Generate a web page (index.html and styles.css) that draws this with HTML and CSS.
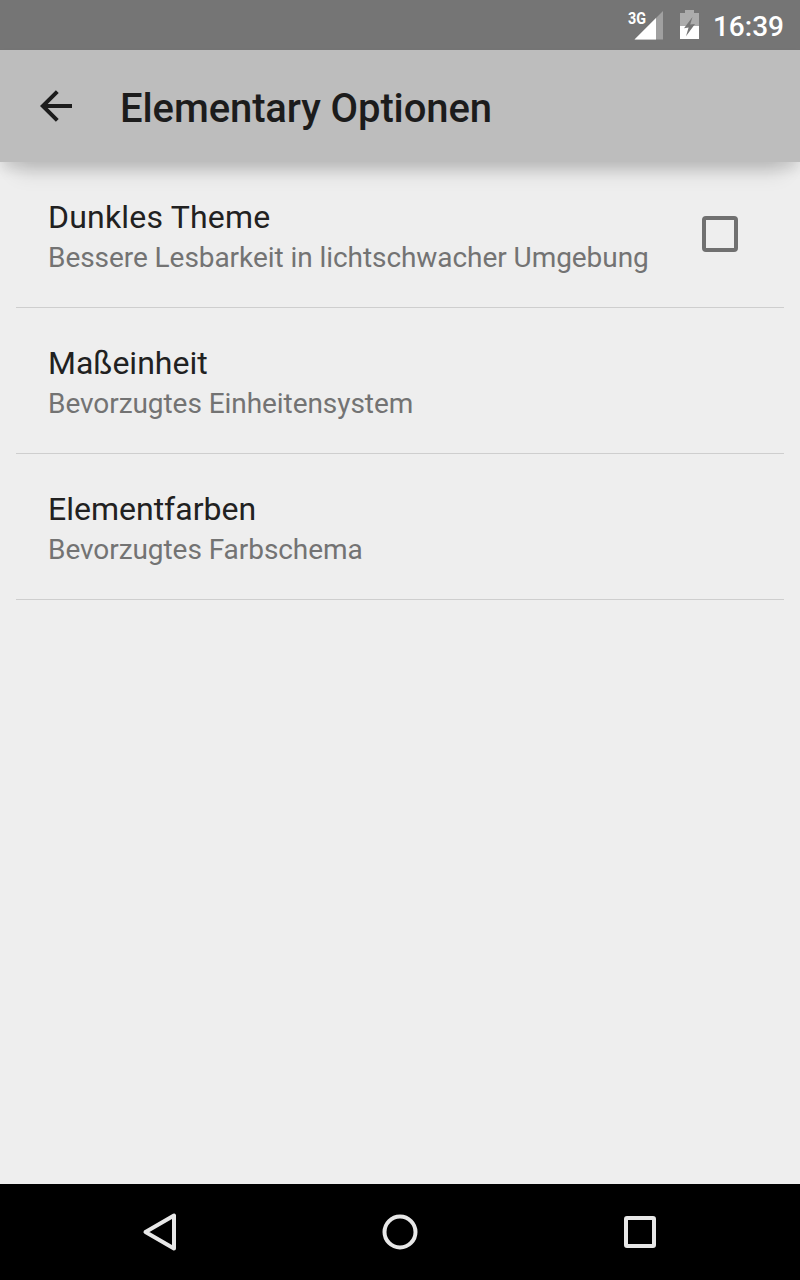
FILE: index.html
```html
<!DOCTYPE html>
<html lang="de">
<head>
<meta charset="utf-8">
<title>Elementary Optionen</title>
<link rel="stylesheet" href="styles.css">
</head>
<body>
<div class="screen">
  <div class="status-bar">
    <svg class="signal" width="38" height="32" viewBox="626 9 38 32">
      <path d="M634.5 39.5L663 11V39.5Z" fill="#a0a0a0"/>
      <path d="M634.5 39.5L656 18V39.5Z" fill="#fff"/>
      <text class="network" x="628" y="24" textLength="18" lengthAdjust="spacingAndGlyphs">3G</text>
    </svg>
    <svg class="battery" width="20" height="30" viewBox="680 10 20 30">
      <path d="M685 10H694V13H699V26H680V13H685Z" fill="#acacac"/>
      <path d="M680 26H699V39H680Z" fill="#fff"/>
      <path d="M692.5 17L684 28.2L688.6 27.6L686 36.3L695 24L690.2 24.6Z" fill="#757575"/>
    </svg>
    <span class="clock">16:39</span>
  </div>
  <header class="app-bar">
    <svg class="back" width="32" height="32" viewBox="0 0 32 32">
      <path d="M32 16H4M17.3 1.6L2.8 16L17.3 30.4" fill="none" stroke="#1c1c1c" stroke-width="4"/>
    </svg>
    <h1 class="title">Elementary Optionen</h1>
  </header>
  <main class="options">
    <section class="option">
      <div class="labels">
        <div class="name name-wide">Dunkles Theme</div>
        <div class="summary">Bessere Lesbarkeit in lichtschwacher Umgebung</div>
      </div>
      <span class="checkbox"></span>
    </section>
    <section class="option">
      <div class="labels">
        <div class="name">Maßeinheit</div>
        <div class="summary">Bevorzugtes Einheitensystem</div>
      </div>
    </section>
    <section class="option">
      <div class="labels">
        <div class="name">Elementfarben</div>
        <div class="summary">Bevorzugtes Farbschema</div>
      </div>
    </section>
  </main>
  <nav class="nav-bar">
    <svg width="48" height="48" viewBox="0 0 48 48"><path d="M38 7.5V40.5L9.5 24Z"/></svg>
    <svg width="48" height="48" viewBox="0 0 48 48"><circle cx="24" cy="24" r="15.5"/></svg>
    <svg width="48" height="48" viewBox="0 0 48 48"><rect x="10" y="10" width="28" height="28" rx="1"/></svg>
  </nav>
</div>
</body>
</html>
```
FILE: styles.css
```css
body {
  margin: 0;
  font-family: Roboto, sans-serif;
}
.screen {
  display: flex;
  flex-direction: column;
  width: 800px;
  height: 1280px;
  overflow: hidden;
  background: #eee;
}
.status-bar {
  display: flex;
  flex: none;
  align-items: center;
  justify-content: flex-end;
  box-sizing: border-box;
  height: 50px;
  padding-right: 16px;
  background: #757575;
  color: #fff;
}
.network {
  font-size: 17px;
  font-weight: 700;
  fill: #fff;
}
.battery {
  margin-left: 16px;
}
.clock {
  margin-left: 13px;
  padding-top: 4px;
  font-size: 28px;
  font-weight: 500;
  line-height: 32px;
}
.app-bar {
  display: flex;
  flex: none;
  align-items: center;
  height: 112px;
  padding-left: 40px;
  background: #bdbdbd;
  box-shadow: 0 8px 12px -1px rgba(0, 0, 0, 0.12), 0 26px 20px -16px rgba(0, 0, 0, 0.12);
}
.title {
  margin: 0 0 0 48px;
  padding-top: 6px;
  color: #1c1c1c;
  font-size: 40px;
  font-weight: 500;
  letter-spacing: -0.1px;
  line-height: 48px;
}
.options {
  flex: 1;
  margin: 0 16px;
}
.option {
  display: flex;
  box-sizing: border-box;
  height: 146px;
  padding: 36px 46px 0 32px;
  border-bottom: 1px solid #cecece;
}
.labels {
  flex: 1;
  white-space: nowrap;
}
.name {
  color: #212121;
  font-size: 32px;
  line-height: 38px;
}
.name-wide {
  letter-spacing: 0.2px;
}
.summary {
  margin-top: 5px;
  color: #737373;
  font-size: 28px;
  letter-spacing: -0.06px;
  line-height: 34px;
}
.checkbox {
  box-sizing: border-box;
  width: 36px;
  height: 36px;
  margin-top: 18px;
  border: 4px solid #707070;
  border-radius: 4px;
}
.nav-bar {
  display: flex;
  flex: none;
  align-items: center;
  justify-content: space-between;
  box-sizing: border-box;
  height: 96px;
  padding: 0 136px;
  background: #000;
  fill: none;
  stroke: #e8e8e8;
  stroke-width: 4;
  stroke-linejoin: round;
}
```
